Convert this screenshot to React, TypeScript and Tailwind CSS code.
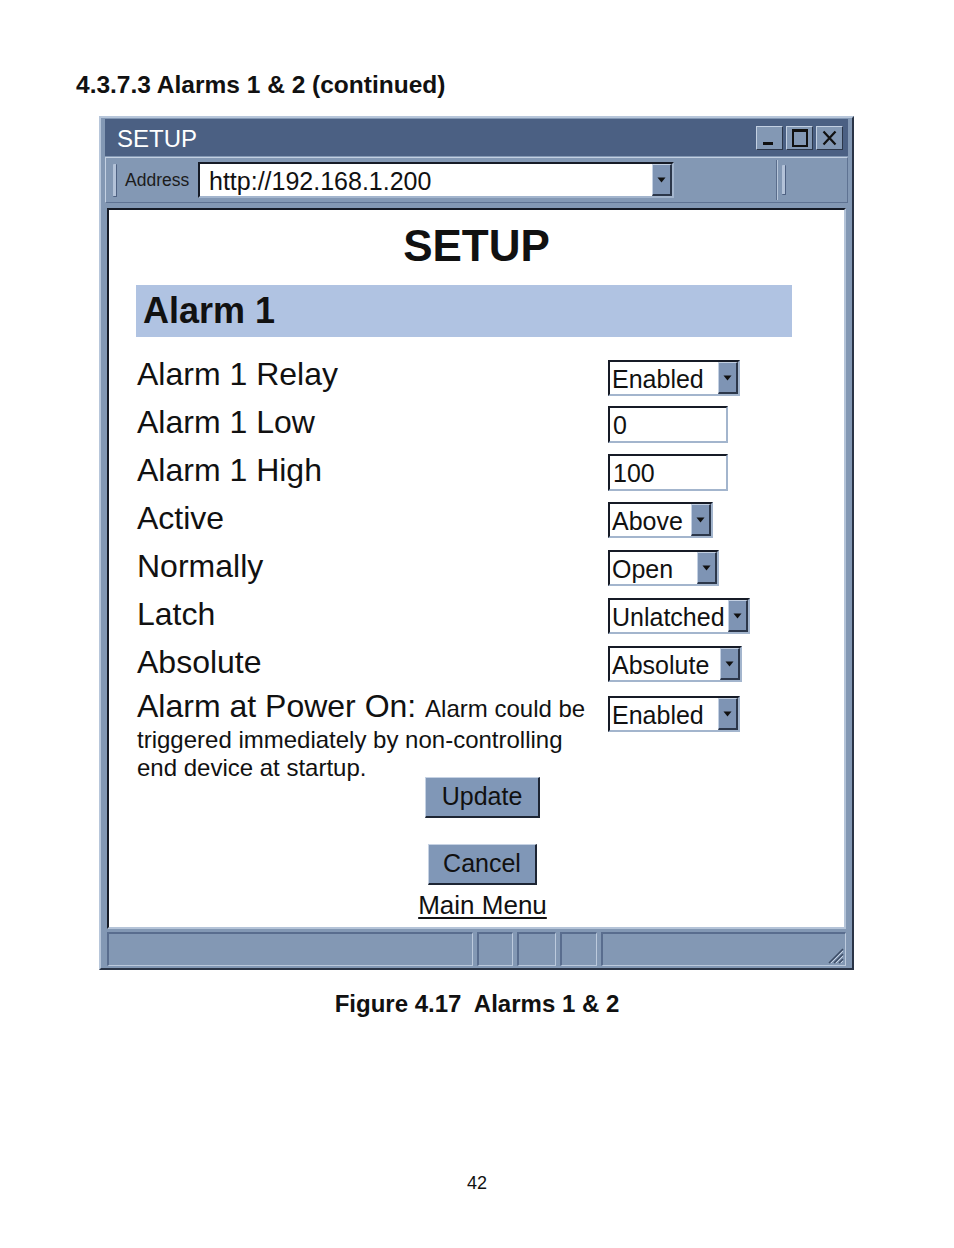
import React from 'react';

// Bevel helpers (Motif-style blue-gray window)
const raised = 'border-t border-l border-t-[#c3d0e2] border-l-[#c3d0e2] border-b border-r border-b-[#2c374a] border-r-[#2c374a]';
const sunken = 'border-t-2 border-l-2 border-t-[#161b26] border-l-[#161b26] border-b-2 border-r-2 border-b-[#a3b5cd] border-r-[#a3b5cd]';

function Arrow() {
  return (
    <div className={`w-[20px] self-stretch bg-[#7e94b4] flex items-center justify-center ${raised} border-b-2 border-r-2`}>
      <svg width="9" height="6" viewBox="0 0 9 6">
        <path d="M0.5 0.5 L8.5 0.5 L4.5 5.5 Z" fill="#111" />
      </svg>
    </div>
  );
}

function Select({ value, width }: { value: string; width: string }) {
  return (
    <div className={`${width} h-[36px] flex bg-white ${sunken}`}>
      <div className="flex-1 pl-[2px] text-[25px] leading-[34px] text-[#111] whitespace-nowrap overflow-hidden">{value}</div>
      <Arrow />
    </div>
  );
}

function Field({ value }: { value: string }) {
  return (
    <div className={`w-[120px] h-[37px] bg-white ${sunken}`}>
      <div className="pl-[3px] text-[25px] leading-[35px] text-[#111]">{value}</div>
    </div>
  );
}

const rows: { label: string; control: React.ReactNode }[] = [
  { label: 'Alarm 1 Relay', control: <Select value="Enabled" width="w-[132px]" /> },
  { label: 'Alarm 1 Low', control: <Field value="0" /> },
  { label: 'Alarm 1 High', control: <Field value="100" /> },
  { label: 'Active', control: <Select value="Above" width="w-[105px]" /> },
  { label: 'Normally', control: <Select value="Open" width="w-[111px]" /> },
  { label: 'Latch', control: <Select value="Unlatched" width="w-[142px]" /> },
  { label: 'Absolute', control: <Select value="Absolute" width="w-[134px]" /> },
];

function TitleButton({ children }: { children: React.ReactNode }) {
  return (
    <div className={`w-[27px] h-[24px] bg-[#8398b4] flex items-center justify-center ${raised}`}>{children}</div>
  );
}

function Grip({ h }: { h: string }) {
  return <div className={`w-[4px] ${h} bg-[#b3c2d8] border-r border-b border-[#4e6182] rounded-[1px]`} />;
}

export default function App() {
  return (
    <div className="w-[954px] h-[1248px] bg-white font-['Liberation_Sans',Arial,sans-serif] text-[#111] overflow-hidden">
      <div className="pt-[72px] pl-[76px] text-[24.5px] font-bold leading-[26px]">4.3.7.3 Alarms 1 &amp; 2 (continued)</div>

      {/* window */}
      <div className="ml-[99px] mt-[18px] w-[755px] h-[854px] bg-[#8398b4] border-2 border-t-[#b7c6da] border-l-[#b7c6da] border-b-[#2a3446] border-r-[#2a3446] px-[4px] pt-[1px] pb-[2px] flex flex-col">
        {/* title bar */}
        <div className="h-[37px] bg-[#4b6083] flex items-center pl-[12px] pr-[5px]">
          <div className="flex-1 text-white text-[24px] leading-[28px] pt-[2px]">SETUP</div>
          <div className="flex gap-[3px]">
            <TitleButton>
              <div className="w-[10px] h-[3px] bg-[#111] mt-[12px] mr-[4px]" />
            </TitleButton>
            <TitleButton>
              <div className="w-[16px] h-[18px] border-2 border-t-[3px] border-[#111]" />
            </TitleButton>
            <TitleButton>
              <svg width="15" height="16" viewBox="0 0 15 16">
                <path d="M1.5 1.5 L13.5 14.5 M13.5 1.5 L1.5 14.5" stroke="#111" strokeWidth="2.2" />
              </svg>
            </TitleButton>
          </div>
        </div>

        {/* address toolbar */}
        <div className={`mt-[1px] h-[46px] bg-[#8398b4] flex items-center ${raised} border-b-[#5e7292] border-r-[#5e7292]`}>
          <div className="ml-[7px]"><Grip h="h-[33px]" /></div>
          <div className="ml-[8px] w-[73px] text-[17.5px] leading-[20px] text-[#1c1c1c]">Address</div>
          <div className={`w-[476px] h-[36px] flex bg-white ${sunken} border-b-[#8da1bf] border-r-[#8da1bf]`}>
            <div className="flex-1 pl-[9px] text-[25px] leading-[34px] whitespace-nowrap">http://192.168.1.200</div>
            <Arrow />
          </div>
          <div className="ml-[102px] h-[40px] w-[2px] border-l border-l-[#5a6d8c] border-r border-r-[#b7c6da]" />
          <div className="ml-[4px]"><Grip h="h-[30px]" /></div>
        </div>

        {/* page content */}
        <div className={`mt-[5px] mx-[2px] h-[721px] bg-white overflow-hidden ${sunken} border-b-[#b5c4d8] border-r-[#b5c4d8]`}>
          <div className="pt-[14px] text-center text-[44px] font-bold leading-[44px]">SETUP</div>
          <div className="mt-[17px] ml-[27px] w-[656px] h-[52px] bg-[#b0c3e2] flex items-center pl-[7px] text-[36px] font-bold leading-[52px]">
            Alarm 1
          </div>

          <div className="mt-[13px] pl-[28px] grid grid-cols-[471px_1fr]">
            {rows.map((r, i) => (
              <React.Fragment key={r.label}>
                <div className="h-[48px] text-[32px] leading-[49px] whitespace-nowrap">{r.label}</div>
                <div className={i === 0 ? 'pt-[10px]' : 'pt-[8px]'}>{r.control}</div>
              </React.Fragment>
            ))}
            <div className="whitespace-nowrap">
              <div className="h-[40px] text-[32px] leading-[40px] overflow-visible">
                <span>Alarm at Power On: </span>
                <span className="text-[24px] leading-[40px]">Alarm could be</span>
              </div>
              <div className="text-[24px] leading-[28px]">triggered immediately by non-controlling</div>
              <div className="text-[24px] leading-[28px]">end device at startup.</div>
            </div>
            <div className="pt-[10px]">
              <Select value="Enabled" width="w-[132px]" />
            </div>
          </div>

          <div className="pl-[12px] flex flex-col items-center">
            <div className="mt-[-5px] w-[115px] h-[41px] bg-[#8097b7] border-t border-l border-[#c6d2e3] border-b-2 border-r-2 border-b-[#1d2533] border-r-[#1d2533] text-[25px] leading-[36px] text-center">
              Update
            </div>
            <div className="mt-[26px] w-[109px] h-[41px] bg-[#8097b7] border-t border-l border-[#c6d2e3] border-b-2 border-r-2 border-b-[#1d2533] border-r-[#1d2533] text-[25px] leading-[36px] text-center">
              Cancel
            </div>
            <a href="#" className="mt-[6px] text-[26px] leading-[28px] underline underline-offset-[3px] decoration-[2px] text-[#111]">
              Main Menu
            </a>
          </div>
        </div>

        {/* status bar */}
        <div className="mt-[3px] h-[34px] flex gap-[4px] px-[2px]">
          {['w-[366px]', 'w-[36px]', 'w-[39px]', 'w-[37px]'].map((w, i) => (
            <div key={i} className={`${w} h-full border-t-2 border-l-2 border-t-[#596d8e] border-l-[#596d8e] border-b border-r border-b-[#bccadd] border-r-[#bccadd]`} />
          ))}
          <div className="flex-1 h-full border-t-2 border-l-2 border-t-[#596d8e] border-l-[#596d8e] border-b border-r border-b-[#bccadd] border-r-[#bccadd] flex items-end justify-end">
            <svg width="18" height="18" viewBox="0 0 18 18" className="mb-[1px] mr-[1px]">
              <path d="M17 3 L3 17 M17 8 L8 17 M17 13 L13 17" stroke="#3c4c66" strokeWidth="1.5" />
              <path d="M17 5 L5 17 M17 10 L10 17 M17 15 L15 17" stroke="#c6d2e3" strokeWidth="1" />
            </svg>
          </div>
        </div>
      </div>

      <div className="mt-[20px] text-center text-[24px] font-bold leading-[28px] whitespace-pre">Figure 4.17  Alarms 1 &amp; 2</div>
      <div className="mt-[155px] text-center text-[18px] leading-[20px]">42</div>
    </div>
  );
}
